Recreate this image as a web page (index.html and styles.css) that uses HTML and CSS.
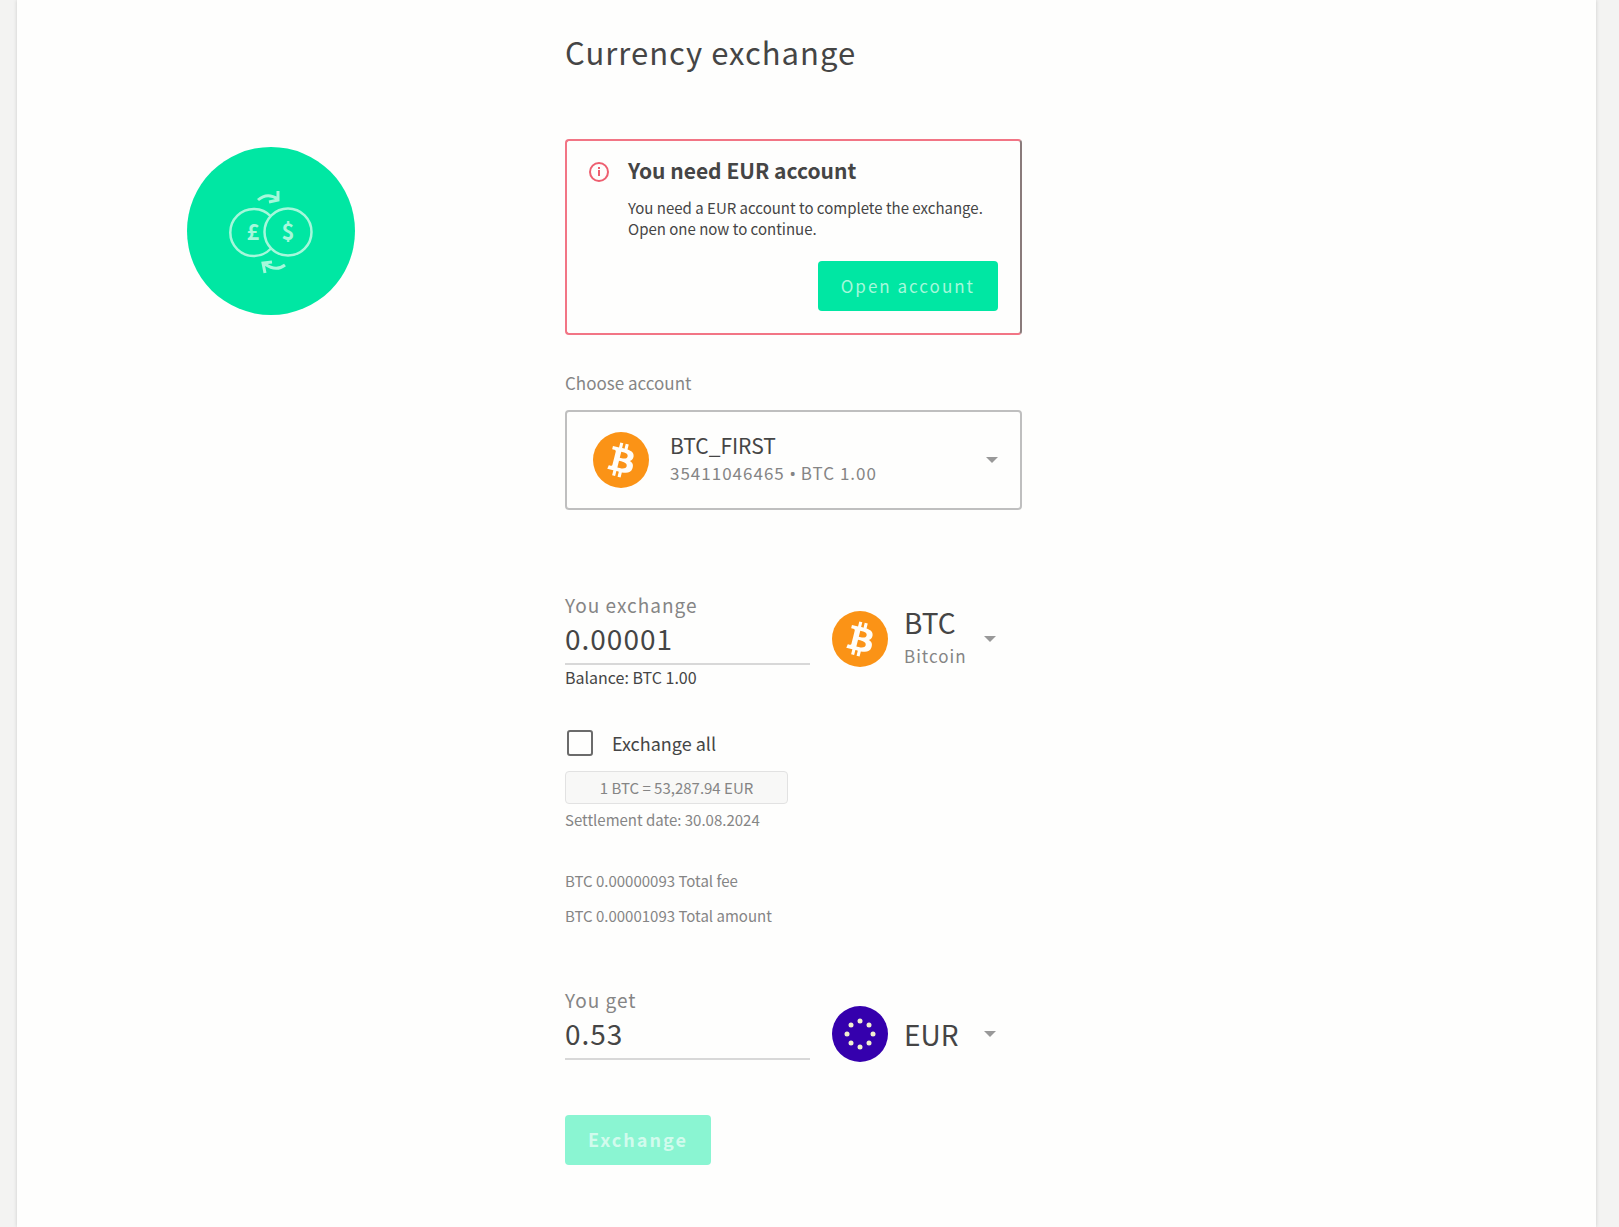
FILE: index.html
```html
<!DOCTYPE html>
<html lang="en">
<head>
<meta charset="utf-8">
<meta name="viewport" content="width=device-width, initial-scale=1">
<title>Currency exchange</title>
<link rel="stylesheet" href="styles.css">
</head>
<body>
<svg width="0" height="0" class="sprite" aria-hidden="true">
  <symbol id="btc" viewBox="0 0 32 32">
    <circle cx="16" cy="16" r="16" fill="#fb9316"/>
    <path fill="#fffdf8" d="M23.189 14.02c.314-2.096-1.283-3.223-3.465-3.975l.708-2.84-1.728-.43-.69 2.765c-.454-.114-.92-.22-1.385-.326l.695-2.783L15.596 6l-.708 2.839c-.376-.086-.746-.17-1.104-.26l.002-.009-2.384-.595-.46 1.846s1.283.294 1.256.312c.7.175.826.638.805 1.006l-.806 3.235c.048.012.11.03.18.057l-.183-.045-1.13 4.532c-.086.212-.303.531-.793.41.018.025-1.256-.313-1.256-.313l-.858 1.978 2.25.561c.418.105.828.215 1.231.318l-.715 2.872 1.727.43.708-2.84c.472.127.93.245 1.378.357l-.706 2.828 1.728.43.715-2.866c2.948.558 5.164.333 6.097-2.333.752-2.146-.037-3.385-1.588-4.192 1.13-.26 1.98-1.003 2.207-2.538zm-3.95 5.538c-.533 2.147-4.148.986-5.32.695l.95-3.805c1.172.293 4.929.872 4.37 3.11zm.535-5.569c-.487 1.953-3.495.96-4.47.717l.86-3.45c.975.243 4.118.696 3.61 2.733z"/>
  </symbol>
  <symbol id="caret" viewBox="0 0 12 6"><path d="M0 0h12L6 6z" fill="#999"/></symbol>
</svg>
<main class="panel">
  <div class="badge">
    <svg viewBox="0 0 168 168" width="168" height="168" fill="none" stroke="#a5f8db" stroke-width="2.500" role="img" aria-label="Currency exchange">
      <circle cx="84" cy="84" r="84" fill="#00e7a3" stroke="none"/>
      <path d="M84 69.500A23.500 23.500 0 1 0 84 101.500"/>
      <circle cx="101" cy="85" r="23.500"/>
      <path stroke-width="3" d="M71 53q9-8 20-1M91 44v9l-9 2"/>
      <path stroke-width="3" d="M98 118q-9 7-20-1M78 126l-2-10 9-1"/>
      <text x="66" y="93" class="coin">£</text>
      <text x="101" y="93" class="coin">$</text>
    </svg>
  </div>
  <form class="content">
    <h1 class="title">Currency exchange</h1>

    <section class="alert">
      <svg class="alert-icon" viewBox="0 0 20 20" width="20" height="20" fill="none" stroke="#ee5f70" stroke-width="2" aria-hidden="true">
        <circle cx="10" cy="10" r="9"/><path d="M10 5v2M10 8v6M9 13h2"/>
      </svg>
      <div class="alert-body">
        <h2 class="alert-title">You need EUR account</h2>
        <p class="alert-text">You need a EUR account to complete the exchange. Open one now to continue.</p>
      </div>
      <button type="button" class="button alert-action">Open account</button>
    </section>

    <label class="label" for="account">Choose account</label>
    <div class="account">
      <svg class="coin-icon" aria-hidden="true"><use href="#btc"/></svg>
      <div class="account-info">
        <select id="account" class="select account-name"><option>BTC_FIRST</option></select>
        <span class="account-sub">35411046465 <span class="dot">•</span> BTC 1.00</span>
      </div>
      <svg class="caret" aria-hidden="true"><use href="#caret"/></svg>
    </div>

    <div class="row">
      <div class="field">
        <label class="field-label" for="from">You exchange</label>
        <input id="from" class="amount" type="text" value="0.00001">
        <span class="balance">Balance: BTC 1.00</span>
      </div>
      <div class="currency">
        <svg class="coin-icon" aria-hidden="true"><use href="#btc"/></svg>
        <div class="currency-info">
          <select class="select currency-code" aria-label="Source currency"><option>BTC</option></select>
          <span class="currency-name">Bitcoin</span>
        </div>
        <svg class="caret" aria-hidden="true"><use href="#caret"/></svg>
      </div>
    </div>

    <label class="check"><input type="checkbox" class="check-box">Exchange all</label>
    <div class="rate">1 BTC = 53,287.94 EUR</div>
    <p class="note">Settlement date: 30.08.2024</p>
    <p class="note fee">BTC 0.00000093 Total fee</p>
    <p class="note total">BTC 0.00001093 Total amount</p>

    <div class="row row-get">
      <div class="field">
        <label class="field-label" for="to">You get</label>
        <input id="to" class="amount" type="text" value="0.53">
      </div>
      <div class="currency">
        <svg class="coin-icon" viewBox="0 0 56 56" aria-hidden="true">
          <circle cx="28" cy="28" r="28" fill="#3500ad"/>
          <g fill="#f3f0cf">
            <circle cx="28" cy="15" r="2.500"/><circle cx="37" cy="19" r="2.500"/><circle cx="41" cy="28" r="2.500"/><circle cx="37" cy="37" r="2.500"/>
            <circle cx="28" cy="41" r="2.500"/><circle cx="19" cy="37" r="2.500"/><circle cx="15" cy="28" r="2.500"/><circle cx="19" cy="19" r="2.500"/>
          </g>
        </svg>
        <div class="currency-info">
          <select class="select currency-code" aria-label="Target currency"><option>EUR</option></select>
        </div>
        <svg class="caret" aria-hidden="true"><use href="#caret"/></svg>
      </div>
    </div>

    <button type="submit" class="button submit" disabled>Exchange</button>
  </form>
</main>
</body>
</html>
```
FILE: styles.css
```css
* { box-sizing: border-box; }

body {
  margin: 0;
  background: #f3f3f2;
  color: #454545;
  font-family: "Noto Sans CJK SC", "Noto Sans", sans-serif;
}

h1, h2, p { margin: 0; }
input, select, button { font-family: inherit; color: inherit; }
.sprite { position: absolute; }

.panel {
  display: grid;
  grid-template-columns: 378px minmax(0, 457px);
  min-height: 100vh;
  margin: 0 23px 0 17px;
  padding: 32px 24px 62px 170px;
  background: #fefefd;
  box-shadow: 0 0 4px rgba(0, 0, 0, .16);
}

.badge { padding-top: 115px; }
.badge svg { display: block; }
.coin {
  fill: #a5f8db;
  stroke: none;
  font-size: 22px;
  font-weight: 700;
  text-anchor: middle;
}

.title {
  margin-bottom: 67px;
  font-size: 31px;
  line-height: 40px;
  font-weight: 400;
  letter-spacing: 1px;
}

.alert {
  display: grid;
  grid-template-columns: 20px 1fr;
  column-gap: 19px;
  padding: 15px 22px 22px;
  border: 2px solid #f27585;
  border-right-color: #8a7b7b;
  border-radius: 4px;
}
.alert-icon { margin-top: 6px; }
.alert-title {
  margin-bottom: 13px;
  font-size: 21px;
  line-height: 28px;
}
.alert-text { font-size: 15px; line-height: 21px; }
.alert-action {
  grid-column: 2;
  justify-self: end;
  margin-top: 22px;
  font-size: 17px;
  letter-spacing: 2px;
}

.button {
  height: 50px;
  padding: 0 23px 2px;
  border: 0;
  border-radius: 4px;
  background: #00e7a3;
  color: #a5f8db;
}

.label {
  display: block;
  margin: 36px 0 15px;
  font-size: 17px;
  line-height: 24px;
  color: #858585;
}

.account {
  display: flex;
  align-items: center;
  height: 100px;
  padding: 0 22px 0 26px;
  border: 2px solid #bfbfbf;
  border-radius: 4px;
}
.coin-icon { flex: none; width: 56px; height: 56px; }
.account-info { display: grid; flex: 1; margin-left: 21px; }
.account-name { font-size: 21px; line-height: 27px; }
.account-sub {
  font-size: 17px;
  line-height: 28px;
  letter-spacing: 1px;
  color: #858585;
}
.dot { font-family: "Noto Sans", sans-serif; letter-spacing: 0; }

.select {
  appearance: none;
  width: 100%;
  padding: 0;
  border: 0;
  background: none;
}
.caret { flex: none; width: 12px; height: 6px; }

.row {
  display: flex;
  align-items: flex-start;
  gap: 22px;
  margin: 82px 0 41px;
}
.field { display: grid; width: 245px; }
.field-label {
  font-size: 19px;
  line-height: 26px;
  letter-spacing: 1px;
  color: #858585;
}
.amount {
  width: 100%;
  height: 47px;
  padding: 0 0 5px;
  border: 0;
  border-bottom: 2px solid #d8d8d8;
  background: none;
  font-size: 28px;
  letter-spacing: 1px;
}
.balance { font-size: 16px; line-height: 24px; }

.currency {
  display: flex;
  flex: 1;
  align-items: center;
  height: 56px;
  margin-top: 19px;
  padding-right: 26px;
}
.currency-info { display: grid; flex: 1; margin-left: 16px; }
.currency-code { font-size: 28px; line-height: 34px; }
.currency-name {
  font-size: 17px;
  line-height: 34px;
  letter-spacing: 1px;
  color: #858585;
}

.check {
  display: flex;
  align-items: center;
  gap: 19px;
  margin-left: 2px;
  font-size: 18px;
  line-height: 26px;
}
.check-box {
  appearance: none;
  width: 26px;
  height: 26px;
  margin: 0;
  border: 2px solid #6b6b6b;
  border-radius: 3px;
}
.check-box:checked { background: #00e7a3; }

.rate {
  width: 223px;
  margin: 15px 0 6px;
  border: 1px solid #e2e2e2;
  border-radius: 4px;
  background: #f8f8f7;
  font-size: 15px;
  line-height: 31px;
  text-align: center;
  color: #858585;
}
.note { font-size: 15px; line-height: 20px; color: #858585; }
.fee { margin: 41px 0 15px; }

.row-get { margin: 61px 0 53px; }

.submit {
  display: block;
  font-size: 18px;
  font-weight: 700;
  letter-spacing: 2px;
}
.submit:disabled { background: #8af5d2; color: #d2fbed; }

@media (max-width: 1000px) {
  .panel { grid-template-columns: minmax(0, 458px); padding-left: 24px; }
  .badge { padding: 0 0 32px; }
}
```
